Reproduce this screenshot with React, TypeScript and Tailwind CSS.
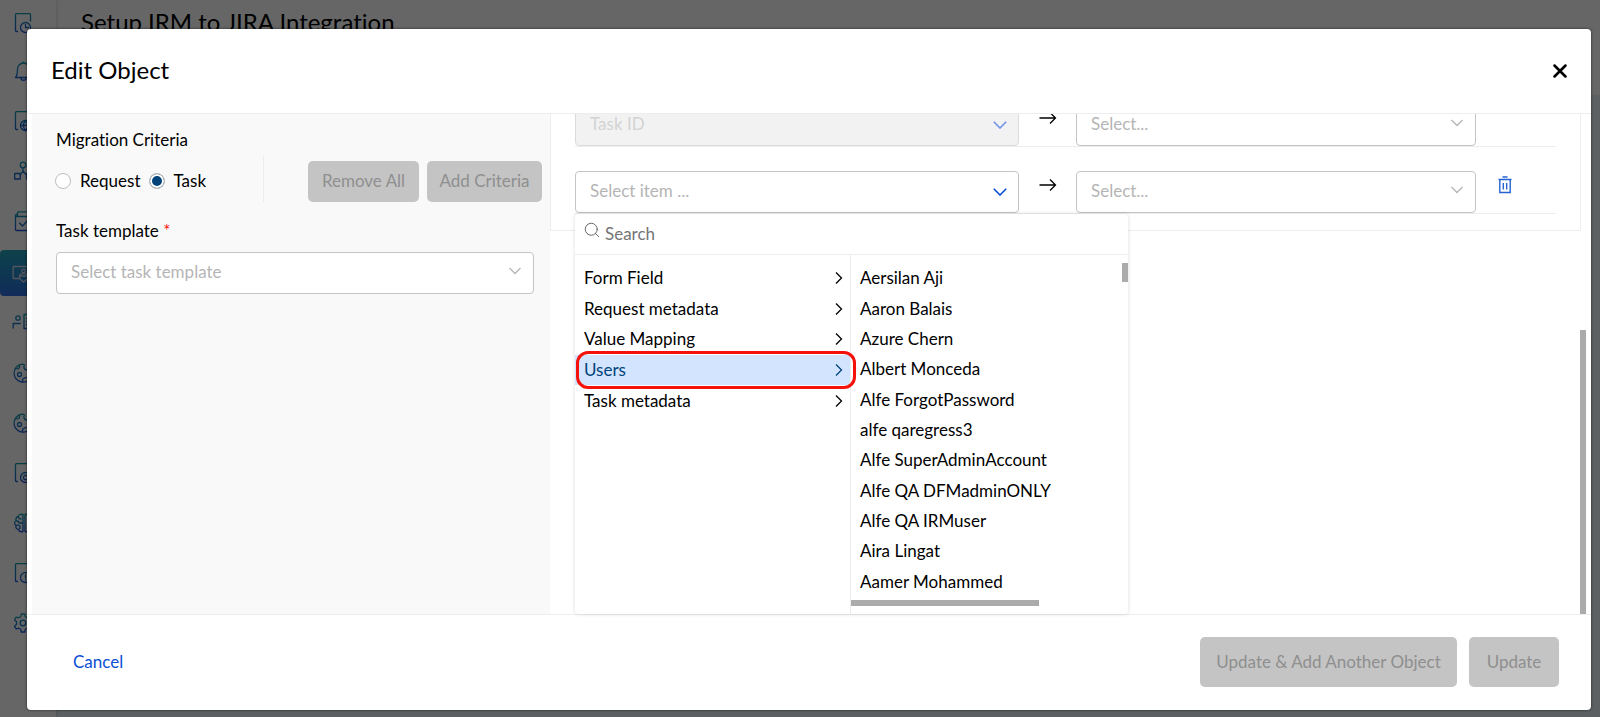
import type { ReactNode } from "react";
import { Search, X } from "lucide-react";
import clsx from "clsx";

const GROUPS = ["Form Field", "Request metadata", "Value Mapping", "Users", "Task metadata"];

const USERS = [
  "Aersilan Aji",
  "Aaron Balais",
  "Azure Chern",
  "Albert Monceda",
  "Alfe ForgotPassword",
  "alfe qaregress3",
  "Alfe SuperAdminAccount",
  "Alfe QA DFMadminONLY",
  "Alfe QA IRMuser",
  "Aira Lingat",
  "Aamer Mohammed",
];

const NavIcon = ({ children, stroke = "url(#nav)" }: { children: ReactNode; stroke?: string }) => (
  <svg width="20" height="20" viewBox="0 0 20 20" fill="none" stroke={stroke} strokeWidth="1.3" strokeLinecap="round" strokeLinejoin="round" className="overflow-visible">
    {children}
  </svg>
);

/* Page outline with a round badge in its lower right corner */
const PageBadge = ({ children }: { children: ReactNode }) => (
  <NavIcon>
    <path d="M3.5 18.500H2.500a1 1 0 0 1-1-1V1.500a.8.8 0 0 1 .8-.8h13.400a.8.8 0 0 1 .8.8v6.500" />
    <circle cx="11.500" cy="14.500" r="5" />
    {children}
  </NavIcon>
);

const CookieIcon = () => (
  <NavIcon>
    <path d="M8 1.200A9 9 0 1 0 18 9.500c-3 .5-5-.5-4.800-3-2.700 1-4.200-2-2.700-4.500C9.800 1.400 9 1.200 8 1.200z" />
    <circle cx="5.500" cy="11.500" r="2" />
    <path d="M1.800 5.500c2.200 1 4 0 3.700-3M8.500 18.500c-.5-3 2-4.500 5.500-3.500" />
  </NavIcon>
);

const NAV: { name: string; icon: ReactNode; active?: boolean }[] = [
  { name: "Reports", icon: <PageBadge><path d="M11.500 11.500v3h3" /></PageBadge> },
  {
    name: "Alerts",
    icon: (
      <NavIcon>
        <path d="M1.500 16.500c2-2 2-4 2-8.500a6 6 0 0 1 12 0c0 4.500 0 6.500 2 8.500zM7 17c0 3 5 3 5 0M9.500 2V.8" />
      </NavIcon>
    ),
  },
  { name: "Sites", icon: <PageBadge><path d="M6.500 14.500h10M11.500 9.500c-2.500 3-2.500 7 0 10M11.500 9.500c2.500 3 2.500 7 0 10" /></PageBadge> },
  {
    name: "Workflows",
    icon: (
      <NavIcon>
        <circle cx="9" cy="4" r="2.800" />
        <rect x="0.700" y="12.500" width="5.500" height="5.500" />
        <rect x="12.500" y="12.500" width="5.500" height="5.500" />
        <path d="M9 7v3M6.200 14l2.800-4 3.500 4" />
      </NavIcon>
    ),
  },
  {
    name: "Tasks",
    icon: (
      <NavIcon>
        <path d="M3.500 3.500h-1a1 1 0 0 0-1 1v14a1 1 0 0 0 1 1h14a1 1 0 0 0 1-1v-14M3.500 5.500V1.800a1 1 0 0 1 1-1h11v4.700H2M5.500 12l3 3 5.500-6" />
      </NavIcon>
    ),
  },
  {
    name: "Integrations",
    active: true,
    icon: (
      <NavIcon stroke="#ccd6e6">
        <path d="M5 15.500H-.8V3.500h20v12" />
        <circle cx="9.500" cy="8" r="1.800" />
        <path d="M5.500 12.500c.5-2.500 7.500-2.500 8 0M5.500 13h8.500v2.500L9.500 19l-4-3.500z" />
      </NavIcon>
    ),
  },
  {
    name: "Vendors",
    icon: (
      <NavIcon>
        <circle cx="4" cy="5" r="2.200" />
        <path d="M-.8 15v-4.500h7M18 1.500H10v14H18M12.500 5.500h4M12.500 8.500h4M12.500 11.500h4" />
      </NavIcon>
    ),
  },
  { name: "Cookies", icon: <CookieIcon /> },
  { name: "Consent", icon: <CookieIcon /> },
  { name: "Copyright", icon: <PageBadge><path d="M13 13c-1.500-1.500-3.500-.5-3.500 1.500s2 3 3.500 1.500" /></PageBadge> },
  {
    name: "Insights",
    icon: (
      <NavIcon>
        <path d="M9 1.500v17M9 1.500C6.500.8 4.500 1.500 4.200 3.500 2 4 1.500 6 2.200 7.500.2 8.500.2 11.500 2 12.500c-.5 2 .5 3.500 2.200 4C5 18.500 7 19 9 18.500M11 1.500v17M11 1.500c2.500-.7 4.500 0 4.800 2 2.200.5 2.700 2.500 2 4 2 1 2 4 .2 5 .5 2-.5 3.500-2.200 4-.8 2-2.800 2.500-4.800 2M4.500 4c.2 1.500 1 2 2.500 2M2.500 8c1.500 0 2.500.5 3 2H9M2.500 12.500c1-1 3-.5 3.500 1s0 2-1 2.500" />
      </NavIcon>
    ),
  },
  { name: "Issues", icon: <PageBadge><path d="M11.500 11.800v3.200M11.500 17v.2" /></PageBadge> },
  {
    name: "Settings",
    icon: (
      <NavIcon>
        <path d="M7.300 1h3.400l.6 2.700 1.900 1.100 2.600-.8 1.700 2.900-2 1.900v2.400l2 1.900-1.700 2.900-2.600-.8-1.900 1.100-.6 2.700H7.300l-.6-2.700-1.900-1.100-2.600.8L.5 13.100l2-1.900V8.800l-2-1.900L2.200 4l2.600.8 1.900-1.100z" />
        <circle cx="9" cy="10" r="2.800" />
      </NavIcon>
    ),
  },
];

const Backdrop = () => (
  <div className="flex h-full" aria-hidden="true">
    <svg width="0" height="0" className="absolute">
      <defs>
        <linearGradient id="nav" gradientUnits="userSpaceOnUse" x1="0" y1="0" x2="0" y2="20">
          <stop offset="0" stopColor="#14a0ac" />
          <stop offset="1" stopColor="#1c55d8" />
        </linearGradient>
      </defs>
    </svg>
    <nav className="z-10 w-14 shrink-0 bg-white shadow-[0_0_4px_rgba(0,0,0,0.2)]">
      {NAV.map((item, i) => (
        <a
          key={item.name}
          href="#"
          title={item.name}
          className={clsx(
            "flex items-center rounded pl-[14px]",
            i === 0 ? "h-[46px]" : item.active ? "my-[2px] h-[46px]" : "h-[50px]",
            item.active && "bg-linear-to-b from-[#23a4b8] to-[#2d6ce0]",
            item.name === "Tasks" && "mb-1",
          )}
        >
          {item.icon}
        </a>
      ))}
    </nav>
    <div className="flex flex-1 flex-col bg-[#e6f0f4]">
      <div className="h-[95px] bg-white pt-[6px] pl-[25px]">
        <h1 className="text-2xl leading-8">Setup IRM to JIRA Integration</h1>
      </div>
    </div>
  </div>
);

const Chevron = ({ className, wide }: { className?: string; wide?: boolean }) => (
  <svg width="14" height="8" viewBox="0 0 14 8" fill="none" stroke="currentColor" strokeWidth={wide ? 1.6 : 1.3} className={className}>
    <path d={wide ? "M.8.8 7 7 13.200.8" : "M1.500 1 7 6.500 12.500 1"} />
  </svg>
);

type DropdownProps = {
  label: string;
  placeholder: string;
  accent?: boolean;
  disabled?: boolean;
  className?: string;
};

const Dropdown = ({ label, placeholder, accent, disabled, className }: DropdownProps) => (
  <div className={clsx("relative", disabled && "opacity-60", className)}>
    <select
      aria-label={label}
      disabled={disabled}
      className={clsx(
        "block h-[42px] w-full appearance-none rounded border border-[#c4c4c4] px-[14px] pb-[2px] text-[17px] text-[#b5b5b5] opacity-100",
        disabled ? "bg-[#ebebeb]" : "bg-white",
      )}
    >
      <option>{placeholder}</option>
    </select>
    <Chevron
      wide={accent}
      className={clsx(
        "pointer-events-none absolute",
        accent ? "top-[17px] right-3 text-[#0b4fd6]" : "top-[15px] right-3 text-[#b5b5b5]",
      )}
    />
  </div>
);

const TrashIcon = () => (
  <svg width="14" height="18" viewBox="0 0 14 18" fill="none" stroke="#2463d4" strokeWidth="1.400">
    <path d="M4.500 1h5M.5 3.500h13M1.800 3.500v13h10.400v-13M5.300 7v6.500M8.700 7v6.500" />
  </svg>
);

const MappingRow = ({ placeholder, disabled, removable }: { placeholder: string; disabled?: boolean; removable?: boolean }) => (
  <div className="flex h-[67px] shrink-0 items-start border-b border-[#ededed] pt-6">
    <Dropdown label="Source field" placeholder={placeholder} accent disabled={disabled} className="flex-[444]" />
    <div className="flex h-7 w-[57px] items-center justify-center">
      <svg width="18" height="12" viewBox="0 0 18 12" fill="none" stroke="currentColor" strokeWidth="1.300">
        <path d="M.5 6h16M11 .5 16.500 6 11 11.500" />
      </svg>
    </div>
    <Dropdown label="Target field" placeholder="Select..." className="flex-[400]" />
    <div className="h-7 w-20 pl-[22px]">
      {removable && (
        <button type="button" aria-label="Delete row" className="flex h-7 items-center">
          <TrashIcon />
        </button>
      )}
    </div>
  </div>
);

const FieldMenu = () => (
  <div className="absolute top-[100px] bottom-0 left-[25px] flex w-[553px] flex-col rounded-sm bg-white shadow-[0_0_4px_rgba(0,0,0,0.14)]">
    <label className="flex h-[41px] shrink-0 items-center gap-1 border-b border-[#ededed] pl-2">
      <Search size={18} strokeWidth={1.3} className="mb-2 text-[#666]" />
      <input
        type="text"
        placeholder="Search"
        aria-label="Search fields"
        className="flex-1 text-[17px] outline-none placeholder:text-[#757575]"
      />
    </label>
    <div className="relative flex flex-1">
      <ul className="grid h-[161px] w-[276px] grid-rows-5 pt-2">
        {GROUPS.map((g) => {
          const open = g === "Users";
          return (
            <li key={g} className={clsx("relative", open && "bg-[#d3e5fe] text-[#00427a]")}>
              <button type="button" className="flex h-full w-full items-center justify-between pr-2 pl-[9px]">
                {g}
                <svg width="8" height="14" viewBox="0 0 8 14" fill="none" stroke="currentColor" strokeWidth="1.300">
                  <path d="M1 1.500 6.500 7 1 12.500" />
                </svg>
              </button>
              {open && (
                <span className="pointer-events-none absolute -inset-y-1 -right-[5px] left-px z-10 rounded-xl border-3 border-[#f5120a]" />
              )}
            </li>
          );
        })}
      </ul>
      <ul className="grid h-[342px] w-[277px] grid-rows-11 pt-2 pl-[9px]">
        {USERS.map((u) => (
          <li key={u} className="flex items-center">{u}</li>
        ))}
      </ul>
      <span className="absolute inset-y-0 left-[275px] w-px bg-[#ededed]" />
      <span className="absolute top-2 right-0 h-[19px] w-[6px] bg-[#ababab]" />
      <span className="absolute bottom-2 left-[276px] h-[6px] w-[188px] bg-[#ababab]" />
    </div>
  </div>
);

const Radio = ({ label, checked }: { label: string; checked?: boolean }) => (
  <label className="flex items-center gap-[9px]">
    <input
      type="radio"
      name="criteria"
      defaultChecked={checked}
      className="size-4 appearance-none rounded-full border border-[#bdbdbd] bg-white checked:bg-[#00427a] checked:shadow-[inset_0_0_0_2px_#fff]"
    />
    {label}
  </label>
);

const GrayButton = ({ children, className }: { children: ReactNode; className: string }) => (
  <button type="button" disabled className={clsx("rounded-[5px] bg-[#c4c4c4] whitespace-nowrap text-[#8f8f8f]", className)}>
    {children}
  </button>
);

const App = () => (
  <div className="relative h-screen overflow-hidden font-[Lato,sans-serif] text-[17px] leading-6 text-black [font-variant-ligatures:none]">
    <Backdrop />

    <div className="absolute inset-0 z-20 flex bg-black/60 pt-[29px] pr-[9px] pb-[7px] pl-[27px]">
      <div role="dialog" aria-label="Edit Object" className="flex min-w-0 flex-1 flex-col overflow-hidden rounded bg-white shadow-[0_0_3px_rgba(0,0,0,0.6)]">
        <header className="flex h-[85px] shrink-0 items-center justify-between border-b border-[#ededed] pr-5 pl-6">
          <h2 className="pb-[2px] text-2xl">Edit Object</h2>
          <button type="button" aria-label="Close">
            <X size={22} strokeWidth={2.8} />
          </button>
        </header>

        <div className="flex min-h-0 flex-1 pl-[5px]">
          {/* Left: criteria */}
          <section className="w-[518px] shrink-0 bg-[#f9f9f9] pt-[14px] pr-2 pl-6">
            <p>Migration Criteria</p>
            <div className="mt-2 -ml-px flex h-[42px] items-center gap-2">
              <Radio label="Request" />
              <Radio label="Task" checked />
              <span className="ml-auto h-[46px] w-px self-end bg-[#ededed]" />
              <GrayButton className="ml-9 h-[41px] w-[111px]">Remove All</GrayButton>
              <GrayButton className="h-[41px] w-[115px]">Add Criteria</GrayButton>
            </div>
            <p className="mt-[17px]">
              Task template <span className="text-[#f5120a]">*</span>
            </p>
            <Dropdown label="Task template" placeholder="Select task template" className="mt-[9px] mr-2" />
          </section>

          {/* Right: field mapping */}
          <section className="relative min-w-0 flex-1">
            <div className="mr-[10px] flex h-[117px] flex-col justify-end overflow-hidden border border-t-0 border-[#ededed] px-6 pb-4">
              <MappingRow placeholder="Task ID" disabled />
              <MappingRow placeholder="Select item ..." removable />
            </div>
            <FieldMenu />
            <span className="absolute right-[5px] bottom-0 h-[284px] w-[6px] bg-[#ababab]" />
          </section>
        </div>

        <footer className="flex h-24 shrink-0 items-center gap-3 border-t border-[#ededed] pr-8 pb-[2px] pl-[46px]">
          <button type="button" className="mr-auto text-[#0b4fd6]">Cancel</button>
          <GrayButton className="h-[50px] w-[257px]">Update &amp; Add Another Object</GrayButton>
          <GrayButton className="h-[50px] w-[90px]">Update</GrayButton>
        </footer>
      </div>
    </div>
  </div>
);

export default App;
